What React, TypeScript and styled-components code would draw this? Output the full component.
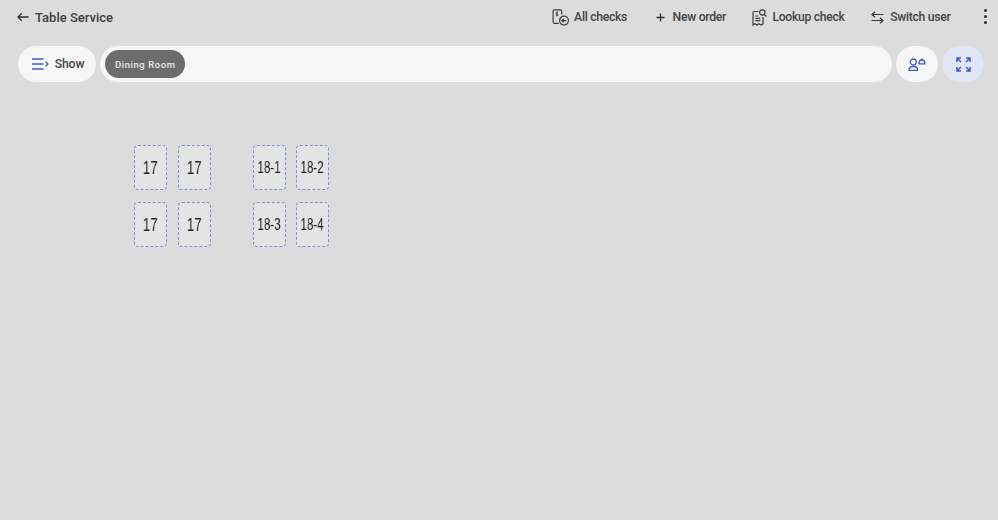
import React from 'react';
import styled, {createGlobalStyle} from 'styled-components';

const GlobalStyle = createGlobalStyle`
  html, body {
    margin: 0;
    padding: 0;
    background: #dcdcdc;
    font-family: Roboto, "Noto Sans", sans-serif;
  }
`

const blue = '#3f5bc4'
const dark = '#3a3a3a'

const ArrowLeftIcon = () => (
    <svg width="12" height="10" viewBox="0 0 12 10" fill="none" stroke="#2e2e2e" strokeWidth="1.3">
        <path d="M11.5 5H1M4.8 1.2 1 5l3.8 3.8"/>
    </svg>
)

const AllChecksIcon = () => (
    <svg width="17" height="17" viewBox="0 0 17 17" fill="none" stroke={dark} strokeWidth="1.2">
        <path d="M6.8 14.3H2.6c-.9 0-1.500-.6-1.500-1.500V2.200C1.100 1.400 1.700.8 2.500.8h5.800c.8 0 1.400.6 1.400 1.400v3.300"/>
        <path d="M6 3.400H4.600c-.9 0-.9 1.500 0 1.600h.7c.9.1.9 1.600 0 1.600H4M5 2.500v4.900" strokeWidth="0.9"/>
        <circle cx="12" cy="11.600" r="4.400"/>
        <path d="M14.300 11.600H9.900M11.700 9.900 9.900 11.600l1.800 1.700"/>
    </svg>
)

const PlusIcon = () => (
    <svg width="12" height="9" viewBox="-2 0 12 9" fill="none" stroke="#2e2e2e" strokeWidth="1.3">
        <path d="M4.500.5v8M.5 4.500h8"/>
    </svg>
)

const LookupIcon = () => (
    <svg width="15" height="17" viewBox="0 0 15 17" fill="none" stroke={dark} strokeWidth="1.2">
        <path d="M6.500 2.500H2.200C1.500 2.500 1 3 1 3.700V16l2-1.200L5 16l2-1.200L9 16l2-1.200V8"/>
        <path d="M3.300 7h3M3.300 9.300h5M3.300 11.600h5"/>
        <circle cx="10.300" cy="3.500" r="2.700"/>
        <path d="m12.300 5.500 2 2"/>
    </svg>
)

const SwitchIcon = () => (
    <svg width="13" height="13" viewBox="0 0 13 13" fill="none" stroke={dark} strokeWidth="1.2">
        <path d="M12.500 3.500H1M4 .7 1 3.500l3 2.800M.5 9.500H12M9 6.700l3 2.800-3 2.800"/>
    </svg>
)

const ShowIcon = () => (
    <svg width="17" height="12" viewBox="0 0 17 12" fill="none" stroke={blue} strokeWidth="1.4">
        <path d="M0 1h11.500M0 6h11.500M0 11h11.500"/>
        <path d="m13.700 3.800 2.200 2.200-2.200 2.200"/>
    </svg>
)

const ServerIcon = () => (
    <svg width="18" height="14" viewBox="0 0 18 14" fill="none" stroke={blue} strokeWidth="1.3">
        <circle cx="5.300" cy="5" r="3"/>
        <path d="M1 13.300c0-2.600 1.800-3.800 4.300-3.800s4.300 1.200 4.300 3.800z"/>
        <path d="M10.300 6.800h7.200M11 6.800c0-2.400 1-3.800 2.900-3.800s2.900 1.400 2.900 3.800M13.900 1.300V3"/>
    </svg>
)

const ExpandIcon = () => (
    <svg width="15" height="15" viewBox="0 0 15 15" fill="none" stroke={blue} strokeWidth="1.5">
        <path d="M1 5V1h4M1 1l4 4M10 1h4v4M14 1l-4 4M1 10v4h4M1 14l4-4M14 10v4h-4M14 14l-4-4"/>
    </svg>
)

const tables = [
    {id: 1, label: '17', x: 134, y: 145},
    {id: 2, label: '17', x: 178, y: 145},
    {id: 3, label: '18-1', x: 253, y: 145},
    {id: 4, label: '18-2', x: 296, y: 145},
    {id: 5, label: '17', x: 134, y: 202},
    {id: 6, label: '17', x: 178, y: 202},
    {id: 7, label: '18-3', x: 253, y: 202},
    {id: 8, label: '18-4', x: 296, y: 202},
]

const headerActions = [
    {label: 'All checks', icon: <AllChecksIcon/>, gap: 5},
    {label: 'New order', icon: <PlusIcon/>, gap: 7},
    {label: 'Lookup check', icon: <LookupIcon/>, gap: 5},
    {label: 'Switch user', icon: <SwitchIcon/>, gap: 6},
]

const App = () => {
    return (
        <Page>
            <GlobalStyle/>
            <Header>
                <BackLink>
                    <ArrowLeftIcon/>
                    <Title>Table Service</Title>
                </BackLink>
                <Actions>
                    {headerActions.map(action => (
                        <Action key={action.label} $gap={action.gap}>
                            {action.icon}
                            {action.label}
                        </Action>
                    ))}
                    <MoreButton>
                        <Dot/><Dot/><Dot/>
                    </MoreButton>
                </Actions>
            </Header>

            <Toolbar>
                <ShowButton>
                    <ShowIcon/>
                    Show
                </ShowButton>
                <AreaBar>
                    <AreaChip>Dining Room</AreaChip>
                </AreaBar>
                <RoundButton>
                    <ServerIcon/>
                </RoundButton>
                <RoundButton $active>
                    <ExpandIcon/>
                </RoundButton>
            </Toolbar>

            <FloorPlan>
                {tables.map(table => (
                    <Table key={table.id} style={{left: table.x, top: table.y - 82}}>
                        <TableLabel $small={table.label.length > 2}>{table.label}</TableLabel>
                    </Table>
                ))}
            </FloorPlan>
        </Page>
    );
};

export default App;

const Page = styled.div`
  width: 998px;
  height: 520px;
  overflow: hidden;
  background: #dcdcdc;
`

const Header = styled.header`
  height: 34px;
  display: flex;
  align-items: center;
  justify-content: space-between;
  padding: 0 10px 0 17px;
`

const BackLink = styled.div`
  display: flex;
  align-items: center;
  gap: 6px;
`

const Title = styled.h1`
  margin: 0;
  font-size: 13px;
  font-weight: 500;
  color: #3c3c3c;
`

const Actions = styled.nav`
  display: flex;
  align-items: center;
`

const Action = styled.button<{$gap: number}>`
  display: flex;
  align-items: center;
  gap: ${props => props.$gap}px;
  margin-right: 26.5px;
  padding: 0;
  border: none;
  background: none;
  font-family: inherit;
  font-size: 12.2px;
  font-weight: 500;
  letter-spacing: -0.3px;
  color: #444;
`

const MoreButton = styled.div`
  width: 6px;
  display: flex;
  flex-direction: column;
  align-items: center;
  gap: 3px;
  margin: 0 0 2px 5px;
`

const Dot = styled.span`
  width: 3px;
  height: 3px;
  border-radius: 50%;
  background: #2e2e2e;
`

const Toolbar = styled.div`
  display: flex;
  gap: 4px;
  height: 36px;
  margin-top: 12px;
  padding: 0 14px 0 18px;
`

const ShowButton = styled.button`
  width: 78px;
  display: flex;
  align-items: center;
  justify-content: center;
  gap: 6px;
  padding: 0 0 0 2px;
  border: none;
  border-radius: 18px;
  background: #f6f6f6;
  font-family: inherit;
  font-size: 12.2px;
  font-weight: 500;
  letter-spacing: -0.1px;
  color: #444;
`

const AreaBar = styled.div`
  flex: 1;
  display: flex;
  align-items: center;
  padding-left: 5px;
  border-radius: 18px;
  background: #f6f6f6;
`

const AreaChip = styled.span`
  height: 28px;
  display: flex;
  align-items: center;
  padding: 0 10px;
  border-radius: 14px;
  background: #6c6c6c;
  font-size: 9.5px;
  font-weight: 500;
  letter-spacing: 0.55px;
  color: #ececec;
`

const RoundButton = styled.button<{$active?: boolean}>`
  width: 42px;
  display: flex;
  align-items: center;
  justify-content: center;
  padding: 0;
  border: none;
  border-radius: 18px;
  background: ${props => props.$active ? '#e1e5f5' : '#f6f6f6'};
`

const FloorPlan = styled.main`
  position: relative;
  height: 300px;
`

const Table = styled.div`
  position: absolute;
  box-sizing: border-box;
  width: 33px;
  height: 45px;
  display: flex;
  align-items: center;
  justify-content: center;
  border: 1px dashed #7b8ed6;
  border-radius: 4px;
  background: #e4e4e4;
`

const TableLabel = styled.span<{$small: boolean}>`
  display: block;
  font-family: "Liberation Sans", Arial, sans-serif;
  font-size: ${props => props.$small ? '16px' : '18.5px'};
  color: #1e1e1e;
  white-space: nowrap;
  transform: scaleX(0.72);
  will-change: transform;
`
